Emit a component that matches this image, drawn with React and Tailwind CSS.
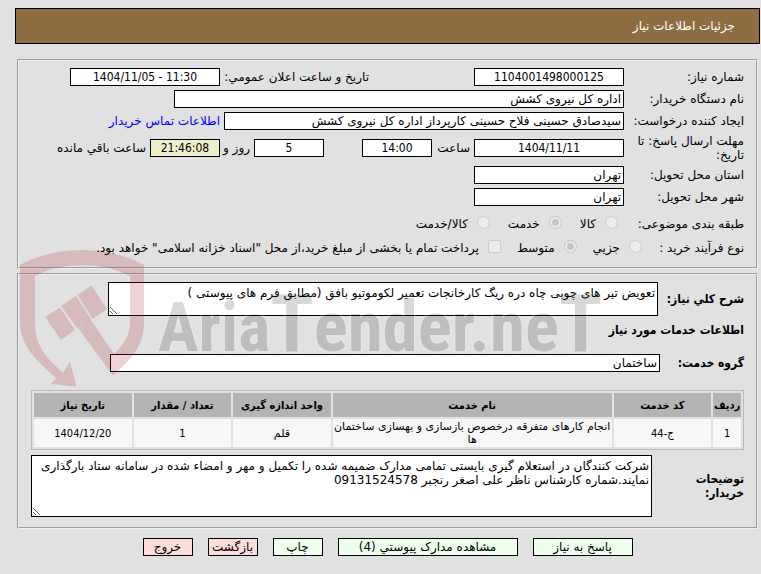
import React from 'react'

const fieldClass = 'h-[18px] min-w-0 border border-black px-[2px] text-black outline-none'
const numeric = "text-center font-['DejaVu_Sans_Condensed','DejaVu_Sans',sans-serif]"
const strong = "font-['DejaVu_Sans_Condensed','DejaVu_Sans',sans-serif] font-bold"

const columns = [
  { title: 'ردیف', width: 'w-[4%]', cell: numeric },
  { title: 'کد خدمت', width: 'w-[14%]', cell: numeric },
  { title: 'نام خدمت', width: 'w-[40%]', cell: '' },
  { title: 'واحد اندازه گیری', width: 'w-[14%]', cell: '' },
  { title: 'تعداد / مقدار', width: 'w-[14%]', cell: numeric },
  { title: 'تاریخ نیاز', width: 'w-[14%]', cell: numeric },
]

const rows = [
  ['1', 'ج-44', 'انجام کارهای متفرقه درخصوص بازسازی و بهسازی ساختمان ها', 'قلم', '1', '1404/12/20'],
]

const actions = [
  { label: 'پاسخ به نیاز', className: 'w-[100px] bg-[#eeffee]' },
  { label: 'مشاهده مدارک پیوستي (4)', className: 'w-[180px] bg-[#eeffee]' },
  { label: 'چاپ', className: 'w-[50px] bg-[#eeffee]' },
  { label: 'بازگشت', className: 'w-[50px] bg-[#ffdddd]' },
  { label: 'خروج', className: 'w-[50px] bg-[#ffdddd]' },
]

function Field({ id, value, className, background = 'bg-white' }) {
  return (
    <input
      id={id}
      type="text"
      readOnly
      defaultValue={value}
      className={`${fieldClass} ${background} ${className}`}
    />
  )
}

function Label({ htmlFor, children }) {
  return (
    <label htmlFor={htmlFor} className="w-[120px] shrink-0">
      {children}
    </label>
  )
}

function Choice({ type = 'radio', name, label, checked }) {
  const shape = type === 'radio' ? 'rounded-full' : 'rounded-[2px]'
  return (
    <label className="flex items-center gap-[9px]">
      <input
        type={type}
        name={name}
        disabled
        defaultChecked={checked}
        className={`mb-1 size-[13px] shrink-0 appearance-none border border-[#cbcbcb] bg-[#ececec] checked:bg-[#c6c6c6] checked:shadow-[inset_0_0_0_2px_#ececec] ${shape}`}
      />
      <span className="whitespace-nowrap">{label}</span>
    </label>
  )
}

function Watermark() {
  return (
    <svg
      className="pointer-events-none absolute top-[245px] left-[15px]"
      width="620"
      height="145"
      viewBox="15 245 620 145"
      aria-hidden="true"
    >
      <g fill="rgba(175,30,40,0.2)">
        <path d="M20 265Q48 250 82 250Q116 250 144 265V322C144 347 131 359 113 375.500L78 328L90 319L114 354C124 344 130 336 130 321V276Q108 265 82 265Q56 265 35 276V324C35 347 48 359 63 373L70 361.500L76.500 386.500L51 384L56 378C38 362 20 347 20 322Z" />
        <path d="M45 317L60 307.500L75 330L61 340Z" />
        <path d="M61 306L76 296L91 319L77 328Z" />
        <path d="M77.500 295L91.500 285.500L107 309L92.500 319Z" />
      </g>
      <text
        x="158"
        y="351"
        direction="ltr"
        fill="#000"
        stroke="#fff"
        strokeWidth="3"
        opacity="0.15"
        fontWeight="700"
        fontFamily='"Liberation Sans Narrow", "Roboto Condensed", "Liberation Sans", sans-serif'
        style={{ paintOrder: 'stroke' }}
      >
        <tspan fontSize="68">Aria</tspan>
        <tspan fontSize="80">T</tspan>
        <tspan fontSize="71">ender.ne</tspan>
        <tspan fontSize="80">T</tspan>
      </text>
    </svg>
  )
}

export default function App() {
  return (
    <div
      dir="rtl"
      lang="fa"
      className="relative min-h-screen bg-[#e1e1e1] pt-2 pr-px pb-4 pl-[15px] font-['DejaVu_Sans',sans-serif] text-[12px] leading-[14px] text-black"
    >
      <header className="flex h-9 items-center border border-black bg-[#8f6d42] px-6 text-white">
        <h1>جزئیات اطلاعات نیاز</h1>
      </header>

      <main className="mt-[15px] mr-[2px] ml-[2px] flex flex-col gap-1">
        <fieldset className="min-w-0 border-2 border-[#f0f0f0] [border-style:groove] px-3 pt-[7px] pb-[9px]">
          <div className="flex flex-col gap-1">
            <div className="flex h-[18px] items-center">
              <Label htmlFor="need-number">شماره نیاز:</Label>
              <Field id="need-number" value="1104001498000125" className={`w-[150px] ${numeric}`} />
              <label htmlFor="announce" className="mr-[105px] w-[149px] shrink-0">تاریخ و ساعت اعلان عمومي:</label>
              <Field id="announce" value="1404/11/05 - 11:30" className={`w-[150px] [direction:ltr] ${numeric}`} />
            </div>
            <div className="flex h-[18px] items-center">
              <Label htmlFor="buyer">نام دستگاه خریدار:</Label>
              <Field id="buyer" value="اداره کل نیروی کشش" className="w-[450px]" />
            </div>
            <div className="flex h-[18px] items-center">
              <Label htmlFor="creator">ایجاد کننده درخواست:</Label>
              <Field id="creator" value="سیدصادق حسینی فلاح حسینی کارپرداز اداره کل نیروی کشش" className="w-[400px]" />
              <a href="#contact" className="mr-1 shrink-0 text-[#0000ff]">اطلاعات تماس خریدار</a>
            </div>
            <div className="flex h-7 items-center">
              <Label htmlFor="deadline">مهلت ارسال پاسخ: تا تاریخ:</Label>
              <Field id="deadline" value="1404/11/11" className={`w-[150px] ${numeric}`} />
              <label htmlFor="deadline-hour" className="mr-1 w-[38px]">ساعت</label>
              <Field id="deadline-hour" value="14:00" className={`w-[70px] ${numeric}`} />
              <Field id="days" value="5" className={`mr-[38px] w-[70px] ${numeric}`} />
              <label htmlFor="days" className="mr-1 w-[30px]">روز و</label>
              <Field id="remaining" value="21:46:08" background="bg-[#eeeecc]" className={`w-[70px] ${numeric}`} />
              <label htmlFor="remaining" className="mr-1 shrink-0">ساعت باقي مانده</label>
            </div>
            <div className="flex h-[18px] items-center">
              <Label htmlFor="province">استان محل تحویل:</Label>
              <Field id="province" value="تهران" className="w-[150px]" />
            </div>
            <div className="flex h-[18px] items-center">
              <Label htmlFor="city">شهر محل تحویل:</Label>
              <Field id="city" value="تهران" className="w-[150px]" />
            </div>
          </div>
          <div className="mt-2 flex h-5 items-center">
            <span className="w-[126px] shrink-0">طبقه بندی موضوعی:</span>
            <div className="flex gap-[18px]">
              <Choice name="category" label="کالا" />
              <Choice name="category" label="خدمت" checked />
              <Choice name="category" label="کالا/خدمت" />
            </div>
          </div>
          <div className="mt-1 flex h-5 items-center">
            <span className="w-[102px] shrink-0">نوع فرآیند خرید :</span>
            <div className="flex gap-4">
              <Choice name="process" label="جزیي" />
              <Choice name="process" label="متوسط" checked />
              <Choice type="checkbox" label='پرداخت تمام یا بخشی از مبلغ خرید،از محل "اسناد خزانه اسلامی" خواهد بود.' />
            </div>
          </div>
        </fieldset>

        <fieldset className="min-w-0 border-2 border-[#f0f0f0] [border-style:groove] px-3 pt-[7px] pb-[10px]">
          <div className="flex items-center">
            <label htmlFor="summary" className={`w-[86px] shrink-0 ${strong}`}>شرح کلي نیاز:</label>
            <textarea
              id="summary"
              readOnly
              defaultValue="تعویض تیر های چوبی چاه دره ریگ کارخانجات تعمیر لکوموتیو بافق (مطابق فرم های پیوستی )"
              className="h-[34px] w-[550px] min-w-0 overflow-hidden border border-black bg-white px-[2px] pt-[3px]"
            />
          </div>
          <h2 className={`mt-[7px] ${strong}`}>اطلاعات خدمات مورد نیاز</h2>
          <div className="mt-[17px] flex items-center">
            <label htmlFor="group" className={`w-[84px] shrink-0 ${strong}`}>گروه خدمت:</label>
            <Field id="group" value="ساختمان" className="w-[550px]" />
          </div>

          <table className="mt-[18px] w-full table-fixed border-separate border-spacing-[2px] border border-[#bbbbbb] text-center text-[11px] leading-[13px]">
            <thead>
              <tr className="h-6 bg-[#b4b4b4]">
                {columns.map((column) => (
                  <th key={column.title} className={`${column.width} ${strong}`}>{column.title}</th>
                ))}
              </tr>
            </thead>
            <tbody>
              {rows.map((row) => (
                <tr key={row[0]} className="h-7 bg-[#f7f7f7]">
                  {row.map((cell, index) => (
                    <td key={index} className={columns[index].cell}>{cell}</td>
                  ))}
                </tr>
              ))}
            </tbody>
          </table>

          <div className="mt-[5px] flex items-center">
            <label htmlFor="notes" className={`w-[92px] shrink-0 pl-4 ${strong}`}>توضیحات خریدار:</label>
            <textarea
              id="notes"
              readOnly
              defaultValue="شرکت کنندگان در استعلام گیری بایستی تمامی مدارک ضمیمه شده را تکمیل و مهر و امضاء شده در سامانه ستاد بارگذاری نمایند.شماره کارشناس ناظر علی اصغر رنجبر 09131524578"
              className="h-[62px] min-w-0 flex-1 border border-black bg-white px-[2px] pt-[3px]"
            />
          </div>
        </fieldset>
      </main>

      <div className="mt-[9px] flex justify-center gap-[15px]">
        {actions.map((action) => (
          <button
            key={action.label}
            type="button"
            className={`h-[18px] border border-black text-center whitespace-nowrap ${action.className}`}
          >
            {action.label}
          </button>
        ))}
      </div>

      <Watermark />
    </div>
  )
}
